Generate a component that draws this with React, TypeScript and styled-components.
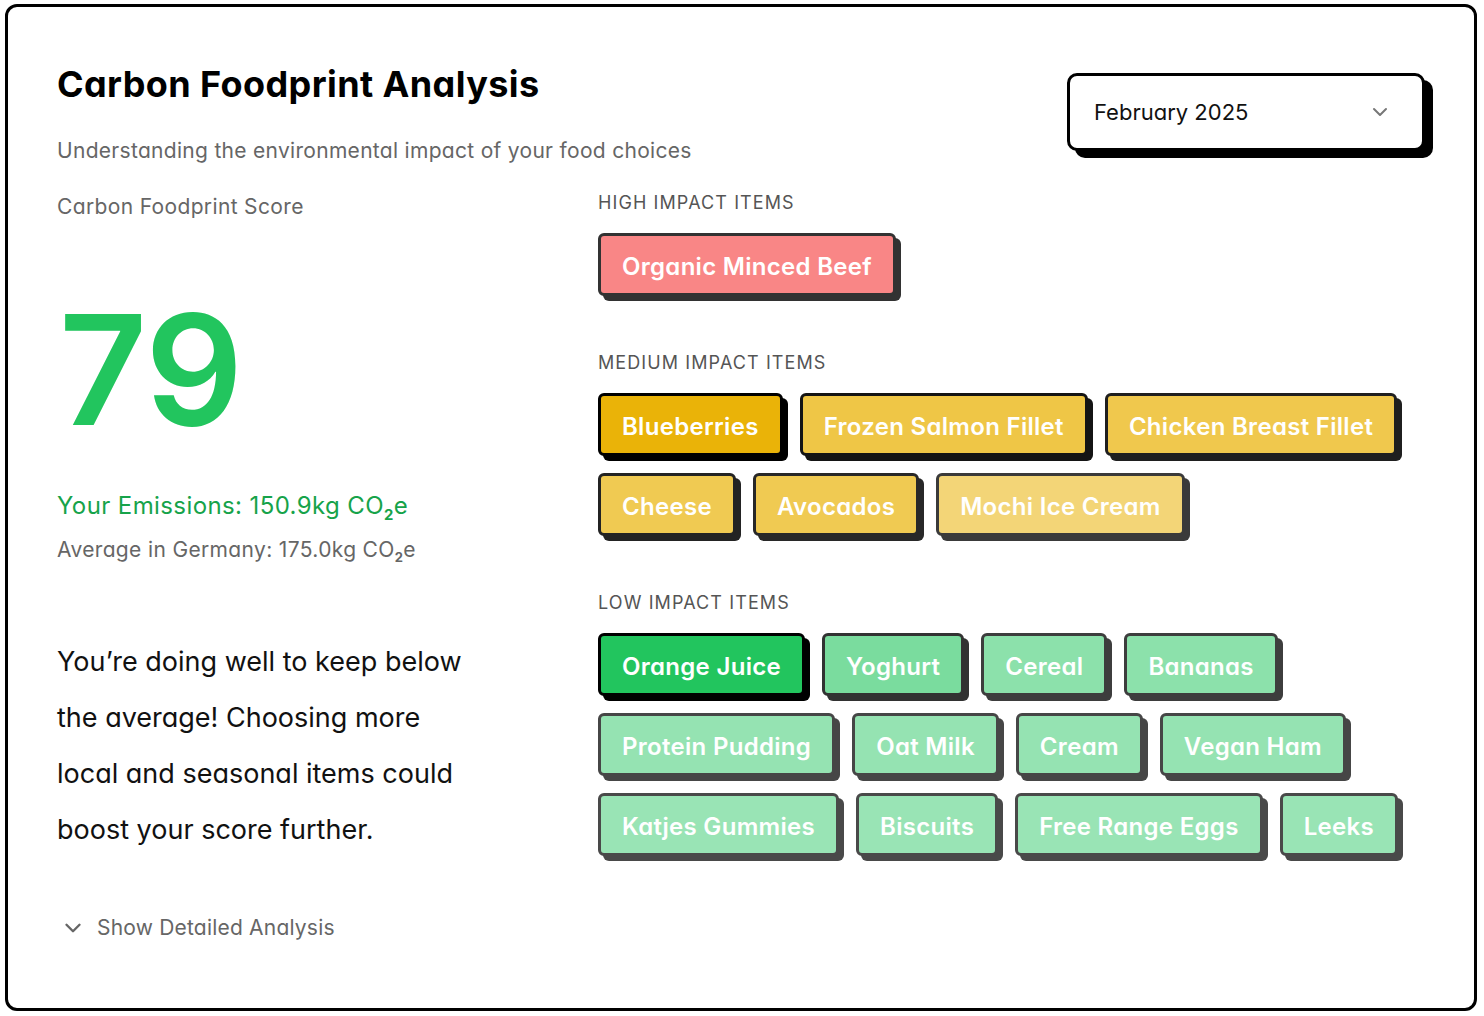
import styled, { createGlobalStyle } from "styled-components";
import { ChevronDown } from "lucide-react";

const GlobalStyle = createGlobalStyle`
	* { box-sizing: border-box; }
	body {
		margin: 0;
		background: #fff;
		font-family: Inter, "Noto Sans", "Liberation Sans", sans-serif;
		font-feature-settings: "cv11" 1;
		color: #111;
	}
`;

const Card = styled.div`
	margin: 4px 7px 5px 5px;
	min-height: calc(100vh - 9px);
	border: 3px solid #000;
	border-radius: 12px;
	padding: 57px 49px 40px 49px;
	background: #fff;
`;

const Header = styled.header`
	display: flex;
	justify-content: space-between;
	align-items: flex-start;
`;

const Title = styled.h1`
	margin: 0;
	font-size: 36px;
	line-height: 40px;
	font-weight: 700;
	letter-spacing: 0.4px;
	color: #000;
`;

const Subtitle = styled.p`
	margin: 33px 0 0;
	font-size: 21px;
	line-height: 28px;
	letter-spacing: 0.3px;
	color: #666;
`;

const Select = styled.button`
	margin-top: 9px;
	width: 358px;
	height: 78px;
	display: flex;
	align-items: center;
	justify-content: space-between;
	padding: 0 30px 0 24px;
	background: #fff;
	border: 3px solid #000;
	border-radius: 10px;
	box-shadow: 8px 7px 0 #000;
	font-family: inherit;
	font-feature-settings: inherit;
	font-size: 22px;
	color: #111;
	cursor: pointer;
`;

const Body = styled.div`
	display: grid;
	grid-template-columns: 492px 1fr;
	gap: 0 49px;
	margin-top: 28px;
`;

const Left = styled.section`
	display: flex;
	flex-direction: column;
`;

const Label = styled.p`
	margin: 0;
	font-size: 21px;
	line-height: 28px;
	letter-spacing: 0.35px;
	color: #666;
`;

const Score = styled.div`
	margin-top: 72px;
	padding-left: 2px;
	font-size: 153px;
	line-height: 153px;
	font-weight: 600;
	letter-spacing: -0.5px;
	color: #22c55e;
`;

const Emissions = styled.p`
	margin: 44px 0 0;
	font-size: 24px;
	line-height: 32px;
	letter-spacing: 0.4px;
	color: #16a34a;
`;

const Average = styled.p`
	margin: 14px 0 0;
	font-size: 21px;
	line-height: 28px;
	letter-spacing: 0.35px;
	color: #666;
`;

const Sub = styled.sub`
	font-size: 0.62em;
	font-weight: 700;
	vertical-align: -0.4em;
	line-height: 0;
`;

const Message = styled.p`
	margin: 70px 0 0;
	max-width: 420px;
	font-size: 27px;
	line-height: 56px;
	color: #111;
`;

const Toggle = styled.button`
	margin-top: 56px;
	display: flex;
	align-items: center;
	gap: 11px;
	padding: 0 0 0 3px;
	background: none;
	border: 0;
	font-family: inherit;
	font-feature-settings: inherit;
	font-size: 21px;
	line-height: 28px;
	letter-spacing: 0.2px;
	color: #666;
	cursor: pointer;
	align-self: flex-start;
`;

const Right = styled.section`
	display: flex;
	flex-direction: column;
	gap: 57px;
`;

const Group = styled.div`
	display: flex;
	flex-direction: column;
`;

const GroupLabel = styled.h3`
	margin: 0 0 20px;
	font-size: 18px;
	line-height: 20px;
	font-weight: 400;
	letter-spacing: 1.1px;
	color: #555;
`;

const Tags = styled.div`
	display: flex;
	flex-wrap: wrap;
	gap: 17px 17px;
`;

const Tag = styled.span<{ $bg: string; $edge: string }>`
	height: 63px;
	display: inline-flex;
	align-items: center;
	padding: 4px 21px 0;
	border: 3px solid ${(p) => p.$edge};
	border-radius: 6px;
	background: ${(p) => p.$bg};
	box-shadow: 5px 5px 0 ${(p) => p.$edge};
	font-size: 24px;
	font-weight: 600;
	letter-spacing: 0.3px;
	color: #fff;
	white-space: nowrap;
`;

type Item = { name: string; alpha: number; edge: number };

const red = "248, 113, 113";
const amber = "234, 179, 8";
const green = "34, 197, 94";

const groups: { label: string; rgb: string; items: Item[] }[] = [
	{
		label: "High impact items",
		rgb: red,
		items: [{ name: "Organic Minced Beef", alpha: 0.85, edge: 0.67 }],
	},
	{
		label: "Medium impact items",
		rgb: amber,
		items: [
			{ name: "Blueberries", alpha: 1, edge: 1 },
			{ name: "Frozen Salmon Fillet", alpha: 0.75, edge: 0.87 },
			{ name: "Chicken Breast Fillet", alpha: 0.72, edge: 0.8 },
			{ name: "Cheese", alpha: 0.7, edge: 0.77 },
			{ name: "Avocados", alpha: 0.7, edge: 0.74 },
			{ name: "Mochi Ice Cream", alpha: 0.55, edge: 0.62 },
		],
	},
	{
		label: "Low impact items",
		rgb: green,
		items: [
			{ name: "Orange Juice", alpha: 1, edge: 1 },
			{ name: "Yoghurt", alpha: 0.6, edge: 0.67 },
			{ name: "Cereal", alpha: 0.52, edge: 0.6 },
			{ name: "Bananas", alpha: 0.52, edge: 0.6 },
			{ name: "Protein Pudding", alpha: 0.48, edge: 0.54 },
			{ name: "Oat Milk", alpha: 0.48, edge: 0.54 },
			{ name: "Cream", alpha: 0.48, edge: 0.54 },
			{ name: "Vegan Ham", alpha: 0.48, edge: 0.54 },
			{ name: "Katjes Gummies", alpha: 0.46, edge: 0.52 },
			{ name: "Biscuits", alpha: 0.46, edge: 0.52 },
			{ name: "Free Range Eggs", alpha: 0.46, edge: 0.52 },
			{ name: "Leeks", alpha: 0.46, edge: 0.52 },
		],
	},
];

const tint = (rgb: string, a: number) => {
	const [r, g, b] = rgb.split(",").map((v) => Number(v.trim()));
	const mix = (c: number) => Math.round(c * a + 255 * (1 - a));
	return `rgb(${mix(r)}, ${mix(g)}, ${mix(b)})`;
};

const grey = (a: number) => {
	const v = Math.round(255 * (1 - a) * 0.6);
	return `rgb(${v}, ${v}, ${v})`;
};

export default function App() {
	return (
		<>
			<GlobalStyle />
			<Card>
				<Header>
					<div>
						<Title>Carbon Foodprint Analysis</Title>
						<Subtitle>Understanding the environmental impact of your food choices</Subtitle>
					</div>
					<Select>
						February 2025
						<ChevronDown size={24} color="#777" strokeWidth={2} />
					</Select>
				</Header>

				<Body>
					<Left>
						<Label>Carbon Foodprint Score</Label>
						<Score>79</Score>
						<Emissions>
							Your Emissions: 150.9kg CO<Sub>2</Sub>e
						</Emissions>
						<Average>
							Average in Germany: 175.0kg CO<Sub>2</Sub>e
						</Average>
						<Message>
							You’re doing well to keep below the average! Choosing more local and seasonal
							items could boost your score further.
						</Message>
						<Toggle>
							<ChevronDown size={26} color="#666" strokeWidth={2.2} />
							Show Detailed Analysis
						</Toggle>
					</Left>

					<Right>
						{groups.map((g) => (
							<Group key={g.label}>
								<GroupLabel>{g.label.toUpperCase()}</GroupLabel>
								<Tags>
									{g.items.map((it) => (
										<Tag key={it.name} $bg={tint(g.rgb, it.alpha)} $edge={grey(it.edge)}>
											{it.name}
										</Tag>
									))}
								</Tags>
							</Group>
						))}
					</Right>
				</Body>
			</Card>
		</>
	);
}
